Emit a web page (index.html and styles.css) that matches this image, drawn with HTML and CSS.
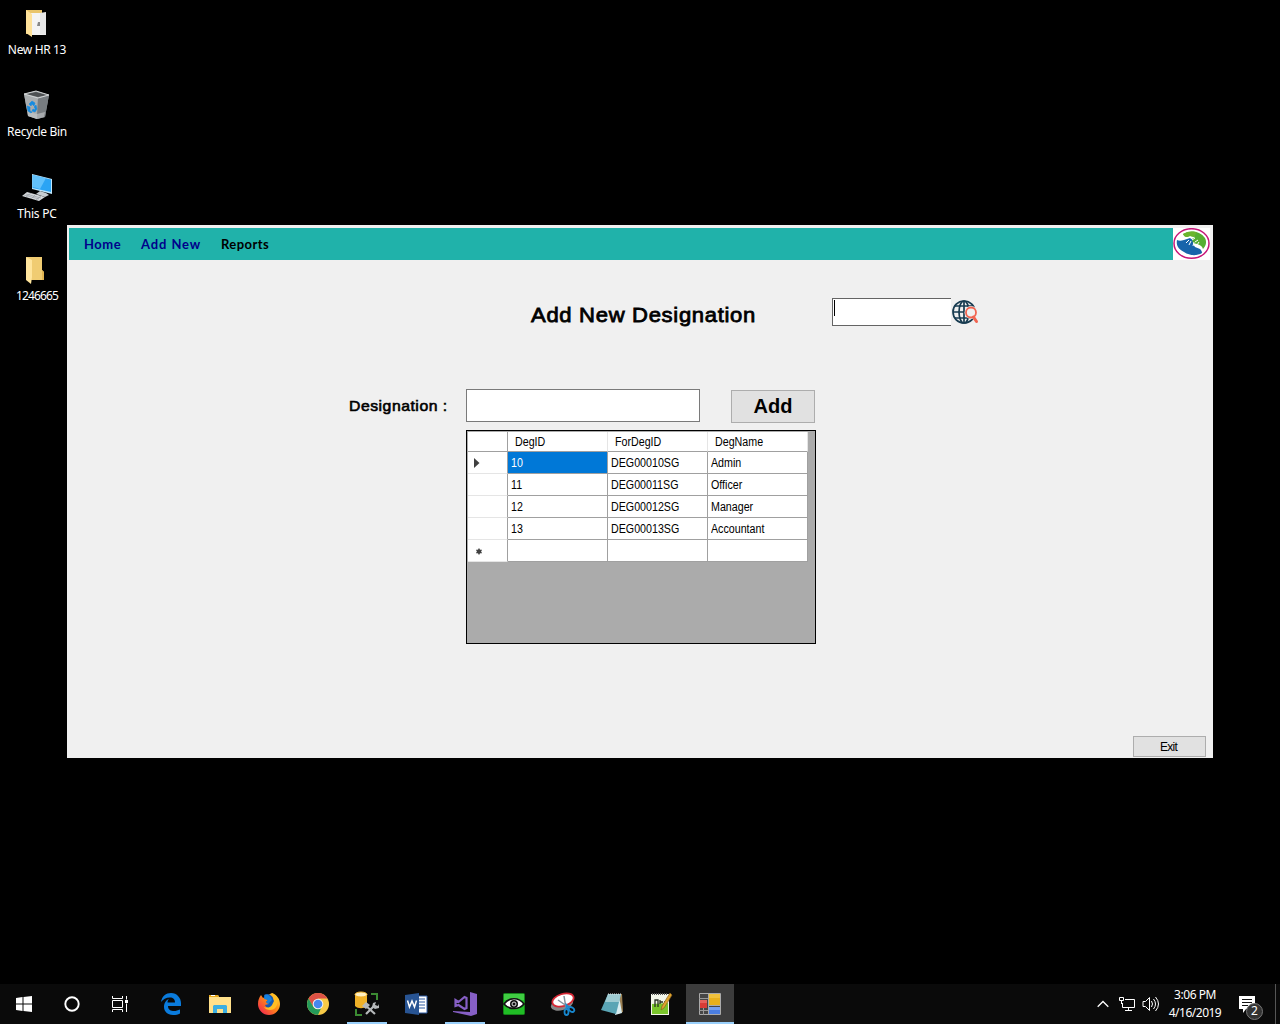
FILE: index.html
```html
<!DOCTYPE html>
<html lang="en">
<head>
<meta charset="utf-8">
<title>Add New Designation</title>
<link rel="stylesheet" href="styles.css">
</head>
<body>
<main class="desktop">
  <nav class="shortcuts">
    <div class="shortcut"><svg width="36" height="32" viewBox="0 0 36 32"><path d="M8 2h16v24H8z" fill="#e9c56c"/><path d="M13 5h15v22H13z" fill="#f4f4f4"/><path d="M22 5l6-1v23l-6-1z" fill="#e7e7e7"/><path d="M8 2l6 4v23l-6-4z" fill="#ffe29a"/><path d="M19 18l1-4h2v4z" fill="#888"/></svg><span class="name hr">New HR 13</span></div>
    <div class="shortcut"><svg width="36" height="32" viewBox="0 0 36 32"><path d="M6 4l12-3 13 4-4 22-8 2-9-3z" fill="#8f9497"/><path d="M6 4l14 4-1 21-9-3z" fill="#a9adaf"/><path d="M20 8l11-3-4 22-8 2z" fill="#777c80"/><path d="M8 4l10-2 11 3-9 2z" fill="#4d5052"/><path d="M6 4l12-3 13 4-11 3z" fill="none" stroke="#d2d5d6"/><path d="M10 22l9 2 8-2-1 5-7 2-9-3z" fill="#c8cacb" opacity=".6"/><path d="M11 14l3-3 3 2-1 3-2-2-1 2zM9 16l3 1v4l2 1-1 1-3-2zM18 15l1 4-2 3-3-1 1-2 2 1v-2l-1-1z" fill="#168be0" stroke="#168be0" stroke-width=".6"/></svg><span class="name bin">Recycle Bin</span></div>
    <div class="shortcut"><svg width="36" height="32" viewBox="0 1 36 32"><path d="M14 3l20 5v15l-20-5z" fill="#bfe6fb"/><path d="M14.500 4L33 8.500V21l-18.500-4z" fill="#2ba4f4"/><path d="M15 4l13 3-6 11-7-2z" fill="#62c1fb"/><path d="M22 20l6 2 3 2-4 2-9-3z" fill="#c7cdd1"/><path d="M9 21l18 5-6 4-17-5z" fill="#d6dadd"/><path d="M8 23l15 4M6 24l15 4M13 22l-5 4m10-3l-5 5m10-3l-5 4" stroke="#8e969c" stroke-width=".6"/></svg><span class="name pc">This PC</span></div>
    <div class="shortcut"><svg width="36" height="32" viewBox="0 0 36 32"><path d="M8 3h16v13l2 2v8H12z" fill="#f0cc72"/><path d="M24 16l2 2v8h-2z" fill="#e1b552"/><path d="M8 3l6 3v17l-1 7-5-4z" fill="#ffe59d"/></svg><span class="name num">1246665</span></div>
  </nav>

  <section class="window">
    <header class="header">
      <nav class="menu"><a class="home">Home</a><a class="add-new">Add New</a><a class="reports">Reports</a></nav>
      <svg class="logo" width="37" height="32" viewBox="0 0 37 32"><path d="M0 0h37v32H0z" fill="#fff"/><ellipse cx="18.500" cy="15.500" rx="17.500" ry="14.800" fill="#fff" stroke="#c61578" stroke-width="1.500"/><path d="M4 12c2 1 4 1 7 0l6-2 4 3-1 3 2 3 5 2c1 1 2 2 2 4-5 3-12 3-18-1C5 21 3 17 4 12z" fill="#1764ab"/><path d="M10 6C18 1 28 4 32 10c2 4 1 8-2 11-1-3-3-4-6-5l-4-1-1-4 3-2-5-1-3 1c-2 0-3-1-4-3z" fill="#56ae31"/><path d="M10 6c5-3 9-3 14-2l-3 5-4-1-3 1c-2 0-3-1-4-3z" fill="#6bb52d"/><path d="M16 12l-3 3m5-2l-2 4m5-3l-1 4m2-8l-3 2m6 0l-3 2m4 0l-2 3" stroke="#fff"/></svg>
    </header>
    <div class="title-row">
      <h1 class="title"><span>Add New Designation</span></h1>
      <div class="search"><i class="caret"></i></div>
      <svg class="globe" width="28" height="28" viewBox="0 0 28 28" fill="none"><g stroke="#173b50" stroke-width="1.700"><circle cx="12" cy="14" r="11"/><ellipse cx="12" cy="14" rx="5" ry="11"/><path d="M12 3v22M1 14h22M3 8h18M3 20h18"/></g><circle cx="19" cy="14.500" r="6.500" fill="#f0f0f0"/><circle cx="19" cy="14.500" r="5" stroke="#f16450" stroke-width="1.800"/><path d="M21.500 19l3 4.500" stroke="#f16450" stroke-width="3" stroke-linecap="round"/></svg>
    </div>
    <div class="form-row">
      <label class="label"><b>Designation :</b></label>
      <div class="input"></div>
      <button class="add">Add</button>
    </div>
    <div class="grid">
      <div class="row head"><span class="mark"></span><span class="cell"><span class="text">DegID</span></span><span class="cell"><span class="text">ForDegID</span></span><span class="cell"><span class="text">DegName</span></span></div>
      <div class="row"><span class="mark"><svg width="6" height="10" viewBox="0 0 6 10"><path d="M0 0l5.500 5L0 10z" fill="#404040"/></svg></span><span class="cell selected"><span class="text">10</span></span><span class="cell"><span class="text">DEG00010SG</span></span><span class="cell"><span class="text">Admin</span></span></div>
      <div class="row"><span class="mark"></span><span class="cell"><span class="text">11</span></span><span class="cell"><span class="text">DEG00011SG</span></span><span class="cell"><span class="text">Officer</span></span></div>
      <div class="row"><span class="mark"></span><span class="cell"><span class="text">12</span></span><span class="cell"><span class="text">DEG00012SG</span></span><span class="cell"><span class="text">Manager</span></span></div>
      <div class="row"><span class="mark"></span><span class="cell"><span class="text">13</span></span><span class="cell"><span class="text">DEG00013SG</span></span><span class="cell"><span class="text">Accountant</span></span></div>
      <div class="row"><span class="mark new"><svg width="6" height="7" viewBox="0 0 6 7"><path d="M3 .5v6M.3 2l5.400 3M.3 5l5.400-3" stroke="#404040" stroke-width="1.300"/><circle cx="3" cy="3.500" r="2.200" fill="#404040"/></svg></span><span class="cell"></span><span class="cell"></span><span class="cell"></span></div>
    </div>
    <button class="exit">Exit</button>
  </section>
</main>

<footer class="taskbar">
  <div class="system">
    <div class="slot"><svg width="16" height="16" viewBox="0 0 16 16" fill="#fff"><path d="M0 2l6.500-1v6.500H0zM7.500.9L16 0v7.500H7.500zM0 8.500h6.500V15L0 14zM7.500 8.500H16V16l-8.500-1z"/></svg></div>
    <div class="slot"><svg width="16" height="16" viewBox="0 0 16 16"><circle cx="8" cy="8" r="6.700" fill="none" stroke="#fff" stroke-width="1.900"/></svg></div>
    <div class="slot"><svg width="16" height="16" viewBox="0 0 16 16" fill="none" stroke="#fff"><path d="M.5 0v2.500h10V0M.5 4.500h10v7H.5zM.5 16v-2.500h10V16M14.500 0v3.500m0 4V16"/><path d="M13 4h3v3h-3z" fill="#fff" stroke="none"/></svg></div>
  </div>
  <div class="apps">
    <div class="slot"><svg width="22" height="24" viewBox="0 0 22 24"><path d="M1 10C2 4 6 1 11 1c6 0 10 5 10 10v3H8c0 4 3 5 6 5 2 0 4-.6 6-1.500v4c-2 1-4 1.500-7 1.500-6 0-9-4-9-8 0-4 2-7 5-8-1 1-1.500 2-1.500 3.500H15C15 7 13 5.500 10 5.500c-4 0-7 2-9 4.500z" fill="#0a7bdc"/></svg></div>
    <div class="slot"><svg width="24" height="24" viewBox="0 0 24 24"><path d="M1 3h9l1 2h12v16H1z" fill="#ffe08a"/><path d="M1 3h9l1 2H1z" fill="#e7a91e"/><path d="M3 3h4v1H3z" fill="#fff"/><path d="M5 21v-7l1-1h12l1 1v7h-4v-4H9v4z" fill="#39aee2"/></svg></div>
    <div class="slot"><svg width="24" height="24" viewBox="0 0 24 24"><defs><linearGradient id="fire" x1="1" x2="0" y2="1"><stop stop-color="#ffe635"/><stop offset=".45" stop-color="#ff8a16"/><stop offset="1" stop-color="#f0145a"/></linearGradient></defs><path d="M4 3l2 3 5-3 4-2c5 2 8 6 8 11a11 11 0 0 1-22 0C1 8 2 6 4 3z" fill="url(#fire)"/><path d="M7 3c5-3 11 2 10 9 0 5-7 6-9 1l4-1-3-2 2-2-4-2z" fill="#1359b5"/><path d="M15 1c6 4 7 9 4 14-2 4-10 4-12 0 3 1 6 1 8-2l2-4z" fill="#ffbd24"/><path d="M8 3c3-1 6 1 7 5l-4 4-2-2 2-2-4-1z" fill="#1681dc"/></svg></div>
    <div class="slot"><svg width="24" height="24" viewBox="0 0 24 24"><circle cx="12" cy="12" r="11" fill="#f7ca47"/><path d="M2.500 6.500A11 11 0 0 1 21.500 6.500H12L7.200 14.700z" fill="#dc5145"/><path d="M2.500 6.500l4.800 8.200c2 3 6 3 8 1L12 23A11 11 0 0 1 2.500 6.500z" fill="#249a5a"/><circle cx="12" cy="12" r="5.300" fill="#f1f1f1"/><circle cx="12" cy="12" r="4.300" fill="#4587ee"/></svg></div>
    <div class="slot running"><svg width="26" height="26" viewBox="0 0 26 26"><path d="M1 3v12c3 3 9 3 12 0V3z" fill="#efb128"/><ellipse cx="7" cy="3.500" rx="6" ry="2.500" fill="#fff0c3" stroke="#efb128"/><path d="M17 3h6v6M2 18v6h6" fill="none" stroke="#3b8b32" stroke-width="2"/><path d="M11 14l10 9M21 14l-9 9" stroke="#b5b8ba" stroke-width="2.200"/><path d="M8 15l4-4 4 3-4 4zM19 12l3-1-1 3 3 1 1-2v4l-4 1-3-2z" fill="#b5b8ba"/></svg></div>
    <div class="slot"><svg width="24" height="24" viewBox="0 0 24 24"><path d="M13 4h10v17H13z" fill="#fff" stroke="#2d5ba4"/><path d="M14 7h7m-7 3h7m-7 3h7m-7 3h7" stroke="#2d5ba4"/><path d="M1 3l14-2v22L1 21z" fill="#285493"/><path d="M3.500 8.500L5.500 15 8 9l2.500 6 2-6.500" fill="none" stroke="#fff" stroke-width="1.500"/></svg></div>
    <div class="slot running"><svg width="26" height="24" viewBox="0 0 26 24"><path d="M18 0l7 2v20l-6 2-18-4v-1l17 1z" fill="#865fc5"/><path d="M3.500 8v6l3-1 6 4 2-1V6l-2-1-6 5z" fill="none" stroke="#865fc5" stroke-width="2.200"/></svg></div>
    <div class="slot"><svg width="22" height="22" viewBox="0 0 22 22"><rect x=".5" y=".5" width="21" height="21" rx="1" fill="#20bd25" stroke="#158419"/><path d="M1 1h20v6H1z" fill="#40cc42"/><path d="M1 11c5-7 15-7 20 0-5 6-15 6-20 0z" fill="#fff" stroke="#111" stroke-width="1.700"/><circle cx="11" cy="11" r="4" fill="#111"/><circle cx="11" cy="11" r="2" fill="#111" stroke="#ddd"/></svg></div>
    <div class="slot"><svg width="26" height="24" viewBox="0 0 26 24"><ellipse cx="12" cy="12" rx="11.500" ry="6" fill="#888" transform="rotate(-17 12 12)"/><ellipse cx="13" cy="8" rx="11" ry="6" fill="#fff" stroke="#d62835" stroke-width="1.700" transform="rotate(-17 13 8)"/><path d="M8 8l10 7M14 4l2 12" stroke="#83939e" stroke-width="1.500"/><g fill="none" stroke="#1787ce" stroke-width="1.800"><ellipse cx="16.500" cy="20" rx="2" ry="3"/><ellipse cx="21.500" cy="17.500" rx="3" ry="2" transform="rotate(35 21.500 17.500)"/><path d="M16.500 17v-4l3 3"/></g></svg></div>
    <div class="slot"><svg width="24" height="24" viewBox="0 0 24 24"><path d="M9 2h13l1 18-5 2z" fill="#9b8053"/><path d="M19 4l3 17-7 2z" fill="#d8edf1"/><path d="M8 2h13l-5 20-15-4z" fill="#5aa5b5"/><path d="M8 2h13l-2 8H5z" fill="#9ecbd2"/><path d="M8 2h13" stroke="#e3e3e3" stroke-dasharray="1 1"/></svg></div>
    <div class="slot"><svg width="24" height="24" viewBox="0 0 24 24"><path d="M2 2h18v21H2z" fill="#f2f5e9"/><path d="M3 12l16-1v11H3z" fill="#7ac52b"/><path d="M3 2h16" stroke="#555" stroke-width="2" stroke-dasharray="1 1"/><path d="M6 15V8h3v7m2-3V8m0 2h3m1 0h3" stroke="#293023" fill="none" stroke-width="1.300"/><path d="M21 1l2 2-8 13-3 2 1-4z" fill="#dfa52e" stroke="#8c611e" stroke-width=".7"/></svg></div>
    <div class="slot active"><svg width="22" height="22" viewBox="0 0 22 22"><path d="M.5.500h21v21H.500z" fill="#464646" stroke="#aaa"/><path d="M0 5.500h9M4.500 15v7M0 17.500h9" stroke="#999"/><path d="M10 1h11v11H10z" fill="#e8b01c"/><path d="M10 1h11v4H10z" fill="#f0c13c"/><path d="M1 7h7v8H1z" fill="#d83a36"/><path d="M1 7h7v3H1z" fill="#e4605b"/><path d="M10 14h11v7H10z" fill="#4b7ee0"/><path d="M10 14h11v3H10z" fill="#76a0ef"/><path d="M9.500 0v22M9 12.500h13" stroke="#aaa"/></svg></div>
  </div>
  <div class="tray">
    <svg width="12" height="8" viewBox="0 0 12 8"><path d="M.7 6.800L6 1.500l5.300 5.300" fill="none" stroke="#fff" stroke-width="1.300"/></svg>
    <svg class="network" width="17" height="14" viewBox="0 0 17 14" fill="none" stroke="#fff"><path d="M6 2.500h9.500v8h-12V6M9.500 11v2M6 13.500h7M.5.500h4v3h-4zM2.500 4v3"/></svg>
    <svg class="sound" width="18" height="16" viewBox="0 0 18 16" fill="none" stroke="#fff"><path d="M1 5.500h2.500l4-4v13l-4-4H1z"/><path d="M9.500 5q2 3 0 6M11.500 3q4 5 0 10M13.500 1q6 7 0 14"/></svg>
    <div class="clock"><span class="time">3:06 PM</span><span class="date">4/16/2019</span></div>
    <div class="notifications"><svg width="17" height="17" viewBox="0 0 17 17"><path d="M0 0h16v13H7l-3 4v-4H0z" fill="#fff"/><path d="M3 3.500h10M3 6.500h10M3 9.500h6" stroke="#111"/></svg><span class="badge">2</span></div>
    <i class="peek"></i>
  </div>
</footer>
</body>
</html>
```
FILE: styles.css
```css
* { box-sizing: border-box; }
body {
  margin: 0;
  width: 1280px;
  height: 1024px;
  display: flex;
  flex-direction: column;
  overflow: hidden;
  background: #000;
  font-family: "Liberation Sans", Arial, sans-serif;
}
svg { display: block; flex: none; }
.desktop { position: relative; flex: 1; }

.shortcuts {
  width: 74px;
  padding-top: 8px;
  display: flex;
  flex-direction: column;
}
.shortcut {
  height: 82px;
  display: flex;
  flex-direction: column;
  align-items: center;
  color: #fff;
  font: 12px/16px "Noto Sans", sans-serif;
}
.shortcut svg { margin-right: 2px; }
.name { margin-top: 2px; white-space: nowrap; }
.hr { letter-spacing: -.35px; }
.bin { letter-spacing: -.3px; }
.pc { letter-spacing: -.2px; }
.num { letter-spacing: -.85px; }

.window {
  position: absolute;
  left: 67px;
  top: 225px;
  width: 1146px;
  height: 533px;
  padding: 3px 3px 0 2px;
  background: #f0f0f0;
  color: #000;
}
.header { display: flex; height: 32px; }
.menu {
  width: 1104px;
  padding-left: 15px;
  display: flex;
  background: #20b2aa;
  color: #00008b;
  font: bold 13px/32px Lato, sans-serif;
  white-space: nowrap;
}
.home { width: 57px; letter-spacing: .5px; }
.add-new { width: 80px; letter-spacing: .9px; }
.reports { color: #000; letter-spacing: .45px; }

.title-row {
  display: flex;
  height: 28px;
  margin: 38px 0 0 462px;
}
.title {
  width: 301px;
  margin: 0;
  font-size: 21px;
  font-weight: normal;
  line-height: 33px;
  white-space: nowrap;
  -webkit-text-stroke: .8px #000;
}
.title span {
  display: inline-block;
  letter-spacing: .65px;
  transform: scaleX(1.05);
  transform-origin: left;
}
.search {
  width: 119px;
  padding: 1px 1px;
  background: #fff;
  border: 1px solid #646464;
  border-right: 0;
}
.caret { display: block; width: 1px; height: 16px; background: #000; }
.globe { margin-left: 1px; }

.form-row { display: flex; margin: 63px 0 0 280px; height: 34px; }
.label {
  width: 117px;
  font-size: 15px;
  line-height: 33px;
}
.label b {
  display: inline-block;
  font-weight: normal;
  white-space: nowrap;
  -webkit-text-stroke: .6px #000;
  letter-spacing: .5px;
  transform: scaleX(1.05);
  transform-origin: left;
}
.input {
  width: 234px;
  height: 33px;
  background: #fff;
  border: 1px solid #7a7a7a;
}
button {
  padding: 0;
  background: #e1e1e1;
  border: 1px solid #adadad;
  font-family: inherit;
  color: #000;
}
.add {
  width: 84px;
  height: 33px;
  margin: 1px 0 0 31px;
  font-size: 20px;
  font-weight: bold;
}

.grid {
  width: 350px;
  height: 214px;
  margin: 7px 0 0 397px;
  border: 1px solid #000;
  background: #ababab;
  font-size: 12px;
  line-height: 21px;
}
.row {
  display: flex;
  width: 341px;
  height: 22px;
  padding-left: 1px;
}
.mark, .cell { border: solid #a0a0a0; border-width: 0 1px 1px 0; background: #fff; }
.mark {
  width: 40px;
  display: flex;
  align-items: center;
  padding: 1px 0 0 6px;
  border-bottom-color: #e5e5e5;
}
.new { padding: 2px 0 0 8px; }
.cell { width: 100px; padding: 1px 0 0 3px; white-space: nowrap; }
.text {
  display: block;
  transform: scaleX(.89);
  transform-origin: left;
}
.selected { background: #0078d7; color: #fff; }
.head { height: 21px; padding-top: 1px; }
.head .cell { padding: 0 0 0 7px; line-height: 20px; border-right-color: #e5e5e5; }
.head .mark { border-bottom-color: #a0a0a0; }

.exit {
  display: block;
  width: 73px;
  height: 21px;
  margin: 92px 0 0 1064px;
  padding-right: 2px;
  font-size: 12px;
  letter-spacing: -.7px;
}

.taskbar { display: flex; height: 40px; background: #0a0a0a; }
.system, .apps { display: flex; }
.apps { gap: 1px; margin-left: 3px; }
.slot {
  width: 48px;
  height: 40px;
  display: flex;
  align-items: center;
  justify-content: center;
}
.running { background: linear-gradient(#99cffa, #99cffa) center bottom / 40px 2px no-repeat; }
.active { background: #3c3c3c; box-shadow: inset 0 -2px #99cffa; }

.tray {
  margin-left: auto;
  width: 183px;
  display: flex;
  align-items: center;
  color: #fff;
}
.network { margin-left: 10px; }
.sound { margin-left: 6px; }
.clock {
  width: 66px;
  display: flex;
  flex-direction: column;
  align-items: center;
  font: 12px/18px "Noto Sans", sans-serif;
  margin-left: 2px;
}
.time { letter-spacing: -.45px; }
.date { letter-spacing: -.5px; }
.notifications { position: relative; margin-left: 11px; }
.badge {
  position: absolute;
  left: 7px;
  top: 7px;
  width: 17px;
  height: 17px;
  border: 1px solid #777;
  border-radius: 50%;
  background: #333;
  font: 12px/14px "Noto Sans", sans-serif;
  text-align: center;
}
.peek { width: 1px; height: 40px; margin: 0 4px 0 auto; background: #565656; }
```
